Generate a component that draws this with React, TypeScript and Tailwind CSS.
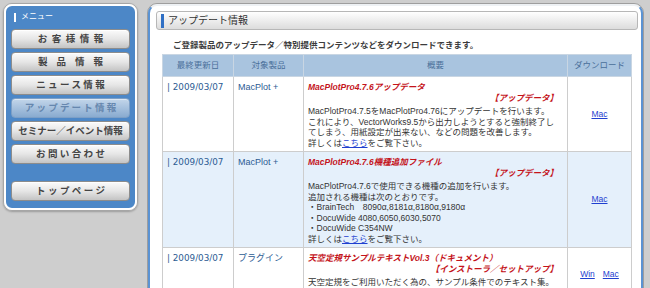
const jp = "font-['Liberation_Sans','Noto_Sans_CJK_JP',sans-serif]";

const menu = [
  { label: "お客様情報", cls: "tracking-[4.5px] pl-[4.5px]" },
  { label: "製品情報", cls: "tracking-[9px] pl-[9px]" },
  { label: "ニュース情報", cls: "tracking-[2.4px] pl-[2.4px]" },
  { label: "アップデート情報", cls: "tracking-[2.2px] pl-[2.2px]", active: true },
  { label: "セミナー／イベント情報", cls: "tracking-[0px]" },
  { label: "お問い合わせ", cls: "tracking-[2.4px] pl-[2.4px]" },
];

function MenuButton({ label, cls, active }: { label: string; cls: string; active?: boolean }) {
  return (
    <div
      className={`h-5 rounded-[4px] border flex items-center justify-center text-[9.5px] font-bold whitespace-nowrap ${cls} ${
        active
          ? "border-[#7d9fc6] bg-linear-to-b from-[#c3d6ea] to-[#89abd0] text-[#6687ae] shadow-[inset_0_1px_0_#dde8f4]"
          : "border-[#8c8c8c] bg-linear-to-b from-[#fbfbfb] via-[#e6e6e6] to-[#c4c4c4] text-[#444] shadow-[inset_0_1px_0_#fff]"
      }`}
    >
      {label}
    </div>
  );
}

function Sidebar() {
  return (
    <div className="w-[135px] h-[208px] shrink-0 rounded-[9px] border border-[#a6a6a6] shadow-[0_1px_2px_rgba(0,0,0,0.25)]">
      <div className="h-full rounded-[8px] border-2 border-white bg-[#4c87c7] px-[5px] pt-[6px]">
        <div className="flex items-center h-[10px] pl-[3px]">
          <div className="w-[2px] h-[9px] bg-white" />
          <span className="ml-[5px] text-[8px] text-white leading-none">メニュー</span>
        </div>
        <div className="mt-[7px] flex flex-col gap-[3px]">
          {menu.map((m) => (
            <MenuButton key={m.label} {...m} />
          ))}
        </div>
        <div className="mt-[17px]">
          <MenuButton label="トップページ" cls="tracking-[2.4px] pl-[2.4px]" />
        </div>
      </div>
    </div>
  );
}

const rows = [
  {
    date: "2009/03/07",
    product: "MacPlot +",
    title: "MacPlotPro4.7.6アップデータ",
    tag: "【アップデータ】",
    body: [
      "MacPlotPro4.7.5をMacPlotPro4.76にアップデートを行います。",
      "これにより、VectorWorks9.5から出力しようとすると強制終了し",
      "てしまう、用紙設定が出来ない、などの問題を改善します。",
    ],
    links: ["Mac"],
    bg: "bg-white",
  },
  {
    date: "2009/03/07",
    product: "MacPlot +",
    title: "MacPlotPro4.7.6機種追加ファイル",
    tag: "【アップデータ】",
    body: [
      "MacPlotPro4.7.6で使用できる機種の追加を行います。",
      "追加される機種は次のとおりです。",
      "・BrainTech　8090α,8181α,8180α,9180α",
      "・DocuWide 4080,6050,6030,5070",
      "・DocuWide C354NW",
    ],
    links: ["Mac"],
    bg: "bg-[#e5f0fb]",
  },
  {
    date: "2009/03/07",
    product: "プラグイン",
    title: "天空定規サンプルテキストVol.3（ドキュメント）",
    tag: "【インストーラ／セットアップ】",
    body: ["天空定規をご利用いただく為の、サンプル条件でのテキスト集。"],
    links: ["Win", "Mac"],
    bg: "bg-white",
  },
];

export default function App() {
  return (
    <div className={`w-[650px] h-[288px] overflow-hidden bg-[#cecece] flex items-start pt-[3px] pl-[3px] ${jp}`}>
      <Sidebar />
      <div className="ml-[9px] w-[497px] h-[300px] shrink-0 rounded-t-[10px] border border-[#9e9e9e]">
        <div className="h-full rounded-t-[9px] border-2 border-[#5b93d3] border-t-[#eef1f4] bg-white">
          <div className="mt-[5px] ml-[6px] mr-[3px] h-[19px] rounded-[3px] border border-[#b7b7b7] bg-linear-to-b from-white to-[#dcdcdc] flex items-center">
            <div className="ml-[4px] w-[3px] h-[14px] bg-[#2f6fc4]" />
            <span className="ml-[4px] text-[10px] text-[#333] leading-none">アップデート情報</span>
          </div>

          <p className="mt-[10px] pl-[23px] text-[8.5px] leading-[11px] font-bold text-[#3c3c3c]">
            ご登録製品のアップデータ／特別提供コンテンツなどをダウンロードできます。
          </p>

          <table className="mt-[3px] ml-[12px] w-[469px] table-fixed border-collapse text-[8.5px] leading-[10.5px]">
            <colgroup>
              <col className="w-[71px]" />
              <col className="w-[70px]" />
              <col className="w-[264px]" />
              <col className="w-[64px]" />
            </colgroup>
            <thead>
              <tr className="h-[22px] bg-[#a9c4df] text-[#4a6f9a]">
                <th className="font-normal border border-[#c9d6e3]">最終更新日</th>
                <th className="font-normal border border-[#c9d6e3]">対象製品</th>
                <th className="font-normal border border-[#c9d6e3]">概要</th>
                <th className="font-normal border border-[#c9d6e3]">ダウンロード</th>
              </tr>
            </thead>
            <tbody>
              {rows.map((r, i) => (
                <tr key={i} className={r.bg}>
                  <td className="align-top border border-[#cdcdcd] pl-[4px] pt-[5px] text-[#2c5b93] font-['DejaVu_Sans',sans-serif] text-[8.8px] whitespace-nowrap">
                    | {r.date}
                  </td>
                  <td className="align-top border border-[#cdcdcd] pl-[4px] pt-[5px] text-[#2c5b93] text-[9px] whitespace-nowrap">
                    {r.product}
                  </td>
                  <td className="align-top border border-[#cdcdcd] pl-[4px] pr-[9px] pt-[5px] pb-[3px] whitespace-nowrap">
                    <div className="font-bold italic text-[#c4141b]">{r.title}</div>
                    <div className="font-bold italic text-[#c4141b] text-right mb-[3px]">{r.tag}</div>
                    <div className="text-[#333]">
                      {r.body.map((b) => (
                        <div key={b}>{b}</div>
                      ))}
                      <div>
                        詳しくは<span className="text-[#1f3fd0] underline">こちら</span>をご覧下さい。
                      </div>
                    </div>
                  </td>
                  <td className="align-middle border border-[#cdcdcd] text-center">
                    <div className="flex justify-center gap-[8px]">
                      {r.links.map((l) => (
                        <span key={l} className="text-[#1f3fd0] underline text-[8.5px]">
                          {l}
                        </span>
                      ))}
                    </div>
                  </td>
                </tr>
              ))}
            </tbody>
          </table>
        </div>
      </div>
    </div>
  );
}
